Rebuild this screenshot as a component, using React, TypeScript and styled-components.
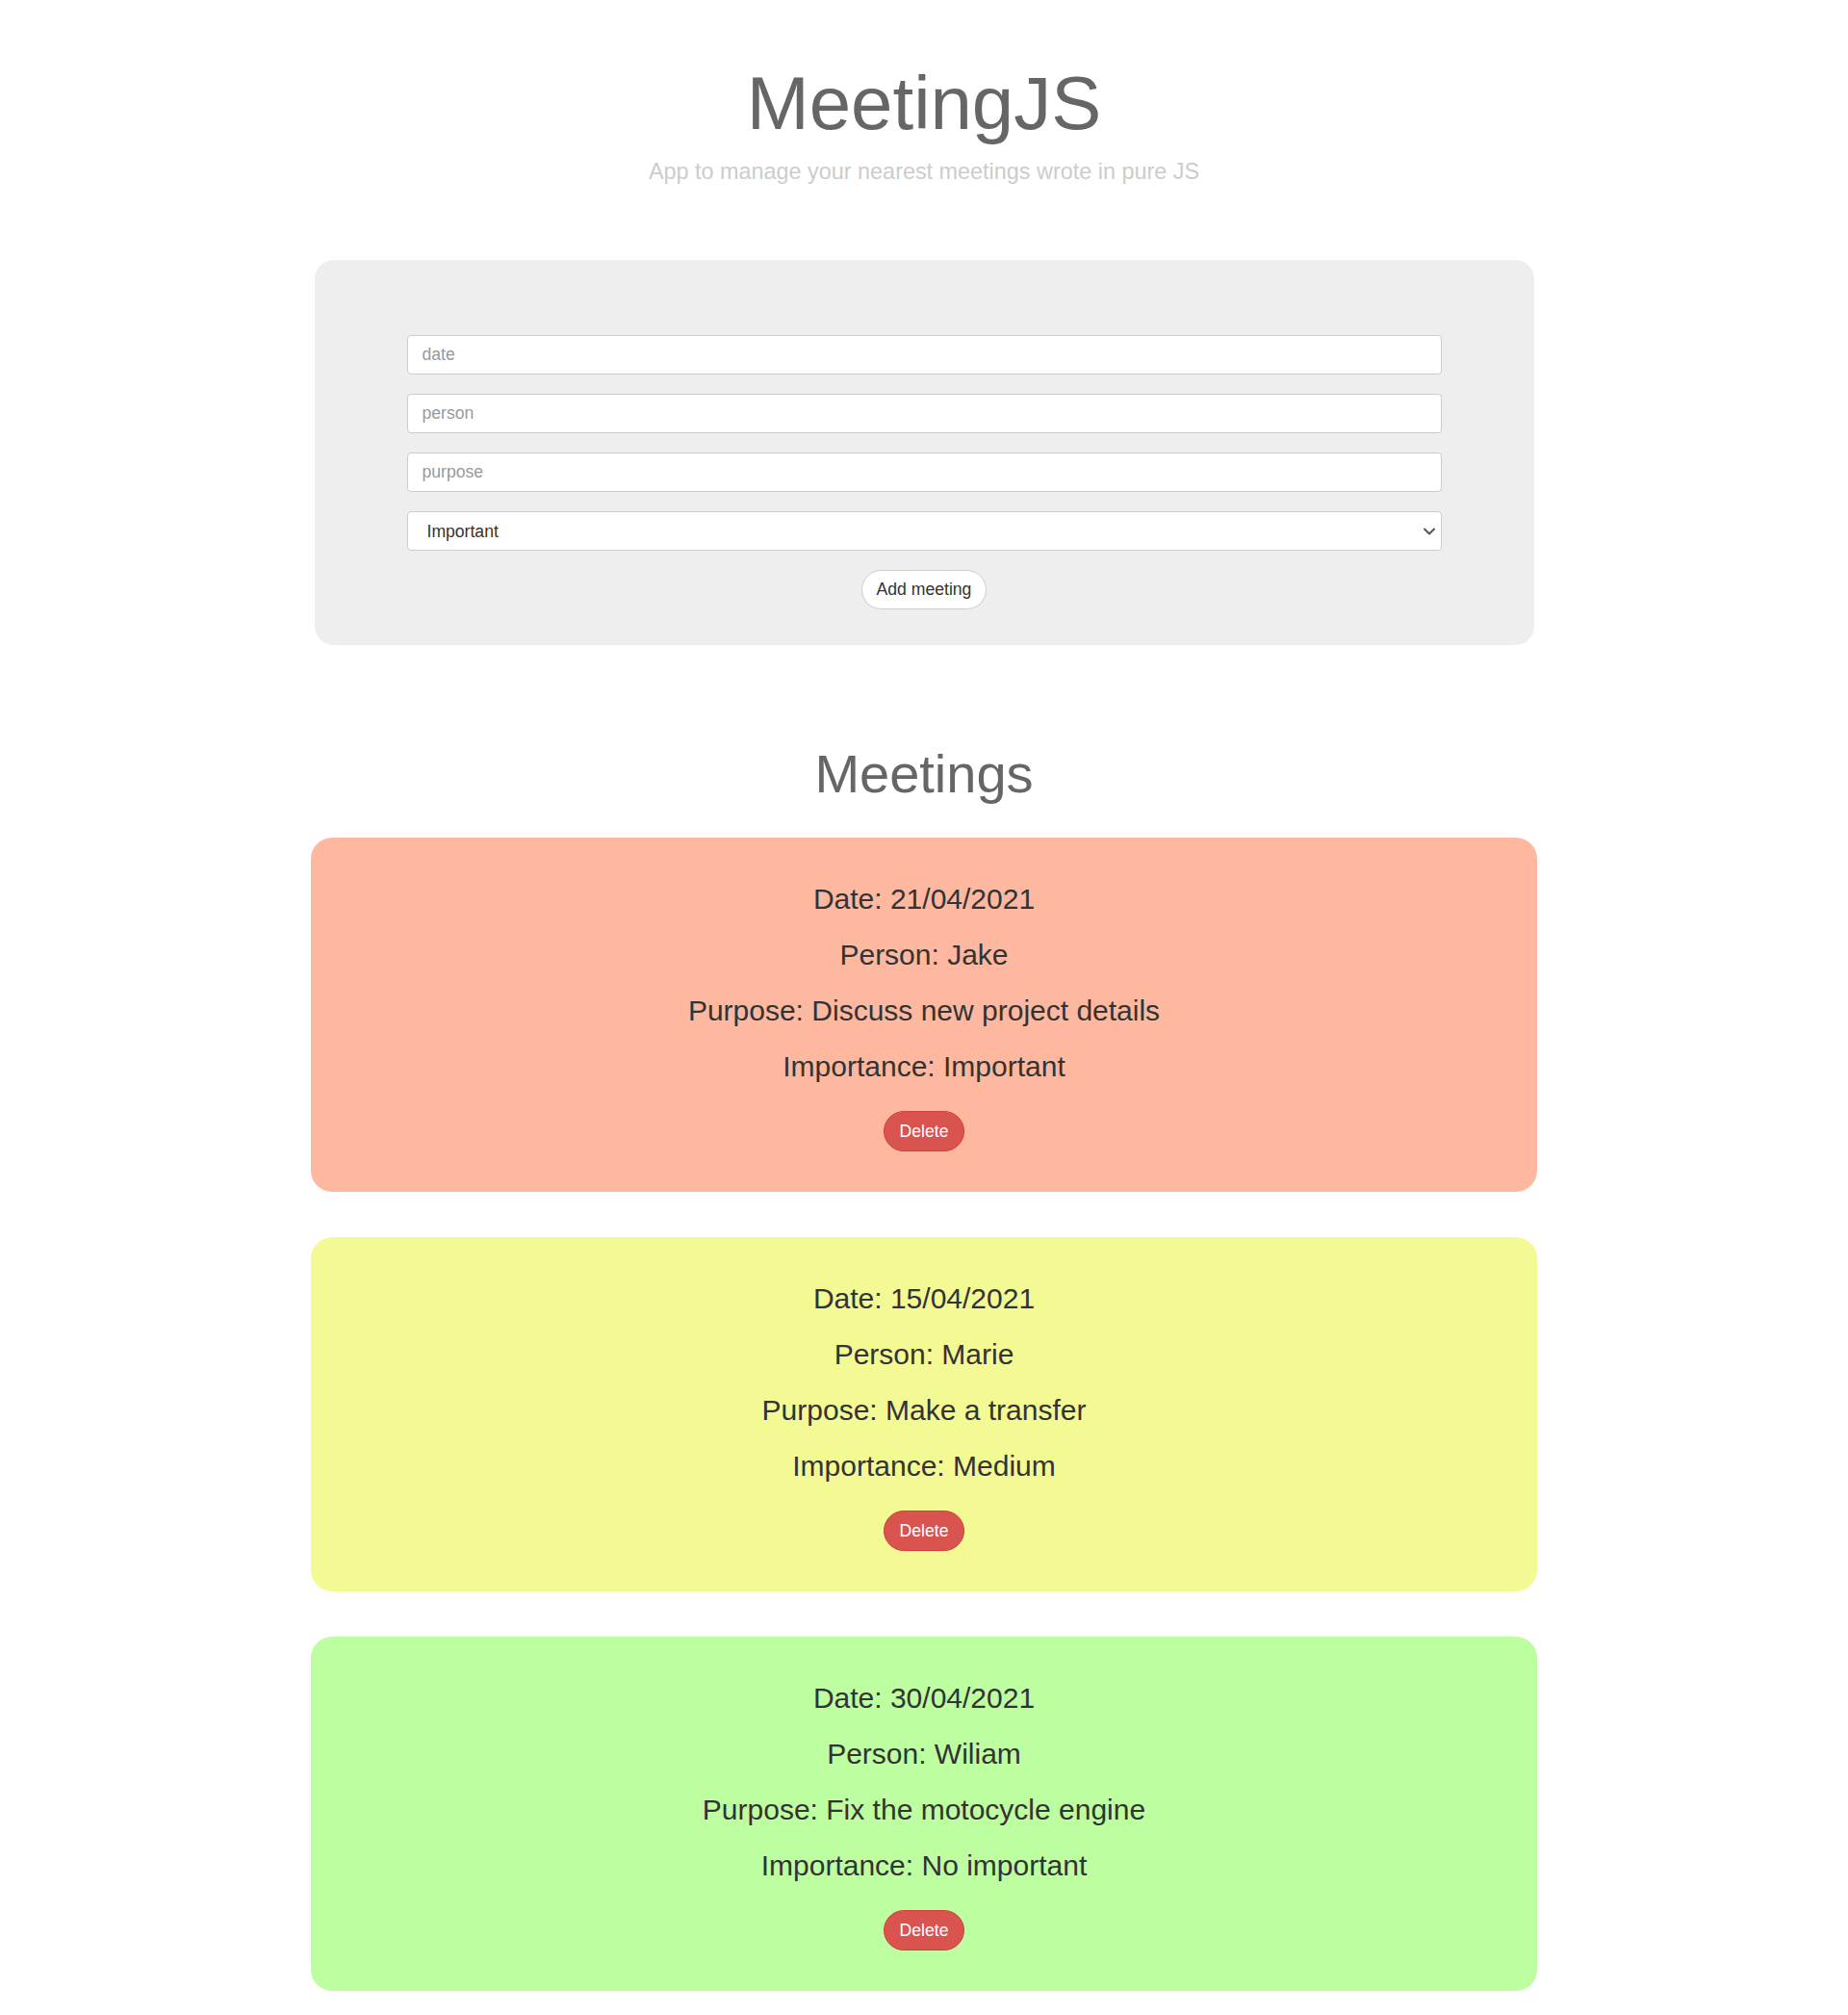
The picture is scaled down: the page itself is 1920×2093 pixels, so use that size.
import React, { useState } from "react";
import styled, { createGlobalStyle } from "styled-components";
import { ChevronDown } from "lucide-react";

const GlobalStyle = createGlobalStyle`
  html, body {
    margin: 0;
    padding: 0;
    background: #ffffff;
    font-family: "Liberation Sans", Arial, sans-serif;
  }
  * { box-sizing: border-box; }
`;

const Page = styled.div`
  display: flex;
  flex-direction: column;
  align-items: center;
  padding: 62px 0 23px;
`;

const Header = styled.header`
  display: flex;
  flex-direction: column;
  align-items: center;
`;

const Title = styled.h1`
  margin: 0;
  font-size: 78px;
  line-height: 90px;
  font-weight: 400;
  color: #666666;
`;

const Subtitle = styled.p`
  margin: 12px 0 0;
  font-size: 23.4px;
  line-height: 28px;
  color: #cccccc;
`;

const FormCard = styled.form`
  margin-top: 78px;
  width: 1267px;
  background: #eeeeee;
  border-radius: 20px;
  padding: 78px 96px 37px;
  display: flex;
  flex-direction: column;
  align-items: center;
  gap: 20px;
`;

const TextInput = styled.input`
  width: 100%;
  height: 41px;
  border: 1px solid #cccccc;
  border-radius: 4px;
  background: #ffffff;
  padding: 0 15px;
  font-family: "Liberation Sans", Arial, sans-serif;
  font-size: 17.6px;
  color: #333333;
  outline: none;
  &::placeholder {
    color: #999999;
  }
`;

const SelectWrap = styled.div`
  position: relative;
  width: 100%;
`;

const Select = styled.select`
  width: 100%;
  height: 41px;
  border: 1px solid #cccccc;
  border-radius: 4px;
  background: #ffffff;
  padding: 0 15px 0 20px;
  font-family: "Liberation Sans", Arial, sans-serif;
  font-size: 17.6px;
  color: #333333;
  appearance: none;
  -webkit-appearance: none;
  outline: none;
`;

const Chevron = styled.span`
  position: absolute;
  right: 3px;
  top: 50%;
  transform: translateY(-50%);
  display: flex;
  pointer-events: none;
  color: #555555;
`;

const AddButton = styled.button`
  height: 41px;
  padding: 0 15px;
  border: 1px solid #cccccc;
  border-radius: 21px;
  background: #ffffff;
  font-family: "Liberation Sans", Arial, sans-serif;
  font-size: 17.6px;
  color: #333333;
  cursor: pointer;
`;

const SectionTitle = styled.h2`
  margin: 102px 0 34px;
  font-size: 56px;
  line-height: 64px;
  font-weight: 400;
  color: #666666;
`;

const List = styled.div`
  display: flex;
  flex-direction: column;
  gap: 47px;
`;

const Card = styled.div<{ $bg: string }>`
  width: 1274px;
  background: ${(p) => p.$bg};
  border-radius: 22px;
  padding: 47px 20px 42px;
  display: flex;
  flex-direction: column;
  align-items: center;
`;

const Lines = styled.div`
  display: flex;
  flex-direction: column;
  align-items: center;
  gap: 24px;
`;

const Line = styled.p`
  margin: 0;
  font-size: 30px;
  line-height: 34px;
  color: #333333;
`;

const DeleteButton = styled.button`
  margin-top: 29px;
  height: 42px;
  padding: 0 16px;
  border: 1px solid #d43f3a;
  border-radius: 21px;
  background: #d9534f;
  color: #ffffff;
  font-family: "Liberation Sans", Arial, sans-serif;
  font-size: 17.6px;
  cursor: pointer;
`;

type Meeting = {
  date: string;
  person: string;
  purpose: string;
  importance: "Important" | "Medium" | "No important";
};

const colors: Record<Meeting["importance"], string> = {
  Important: "#feb89f",
  Medium: "#f3f993",
  "No important": "#bdfea0",
};

const initial: Meeting[] = [
  { date: "21/04/2021", person: "Jake", purpose: "Discuss new project details", importance: "Important" },
  { date: "15/04/2021", person: "Marie", purpose: "Make a transfer", importance: "Medium" },
  { date: "30/04/2021", person: "Wiliam", purpose: "Fix the motocycle engine", importance: "No important" },
];

export default function App() {
  const [meetings, setMeetings] = useState<Meeting[]>(initial);
  const [date, setDate] = useState("");
  const [person, setPerson] = useState("");
  const [purpose, setPurpose] = useState("");
  const [importance, setImportance] = useState<Meeting["importance"]>("Important");

  const add = (e: React.FormEvent) => {
    e.preventDefault();
    if (!date || !person || !purpose) return;
    setMeetings([...meetings, { date, person, purpose, importance }]);
    setDate("");
    setPerson("");
    setPurpose("");
  };

  return (
    <>
      <GlobalStyle />
      <Page>
        <Header>
          <Title>MeetingJS</Title>
          <Subtitle>App to manage your nearest meetings wrote in pure JS</Subtitle>
        </Header>
        <FormCard onSubmit={add}>
          <TextInput placeholder="date" value={date} onChange={(e) => setDate(e.target.value)} />
          <TextInput placeholder="person" value={person} onChange={(e) => setPerson(e.target.value)} />
          <TextInput placeholder="purpose" value={purpose} onChange={(e) => setPurpose(e.target.value)} />
          <SelectWrap>
            <Select
              value={importance}
              onChange={(e) => setImportance(e.target.value as Meeting["importance"])}
            >
              <option>Important</option>
              <option>Medium</option>
              <option>No important</option>
            </Select>
            <Chevron>
              <ChevronDown size={20} strokeWidth={2.5} />
            </Chevron>
          </SelectWrap>
          <AddButton type="submit">Add meeting</AddButton>
        </FormCard>
        <SectionTitle>Meetings</SectionTitle>
        <List>
          {meetings.map((m, i) => (
            <Card key={i} $bg={colors[m.importance]}>
              <Lines>
                <Line>Date: {m.date}</Line>
                <Line>Person: {m.person}</Line>
                <Line>Purpose: {m.purpose}</Line>
                <Line>Importance: {m.importance}</Line>
              </Lines>
              <DeleteButton
                type="button"
                onClick={() => setMeetings(meetings.filter((_, j) => j !== i))}
              >
                Delete
              </DeleteButton>
            </Card>
          ))}
        </List>
      </Page>
    </>
  );
}
